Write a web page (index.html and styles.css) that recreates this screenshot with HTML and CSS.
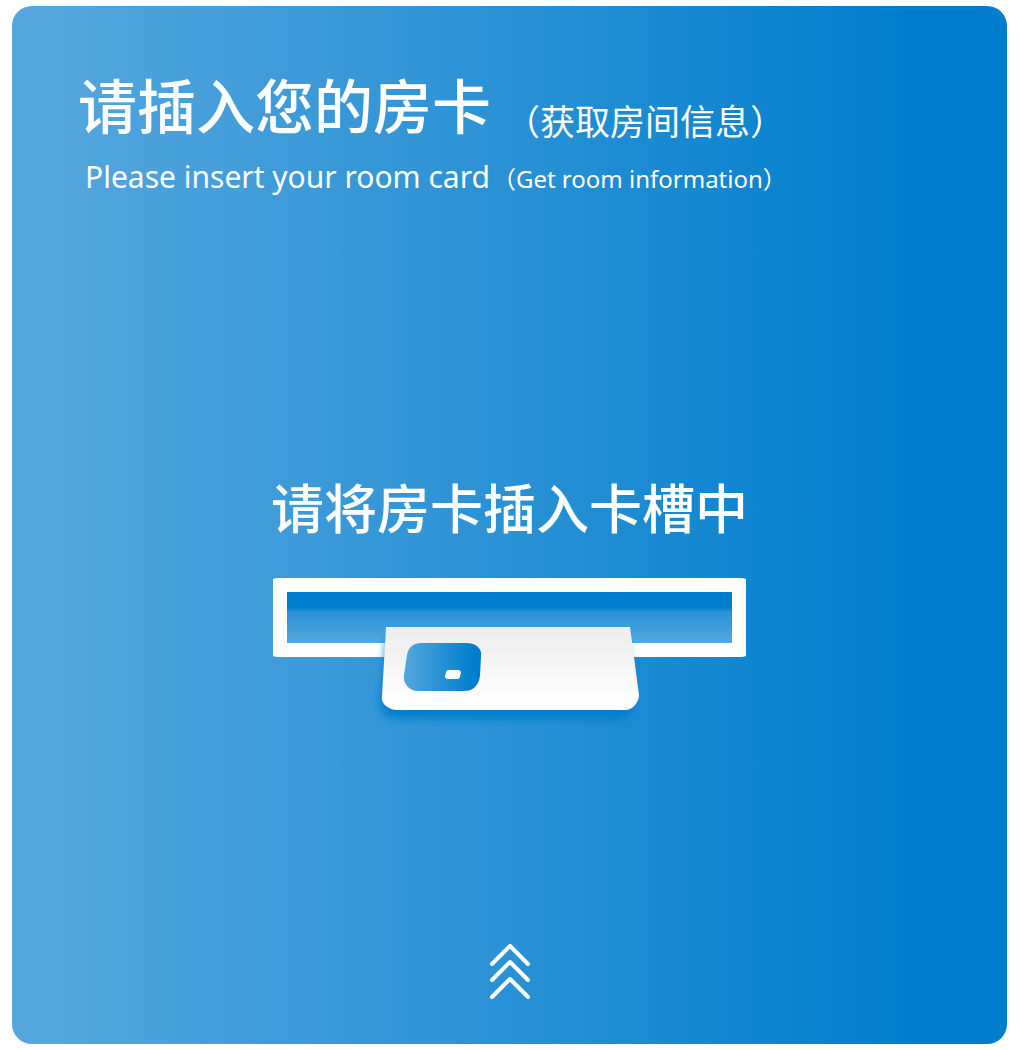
FILE: index.html
```html
<!DOCTYPE html>
<html lang="zh-CN">
<head>
  <meta charset="utf-8">
  <meta name="viewport" content="width=device-width, initial-scale=1">
  <title>请插入您的房卡</title>
  <link rel="stylesheet" href="styles.css">
</head>
<body>
  <main class="panel">
    <header class="intro">
      <h1 class="title"><span class="title-main">请插入您的房卡</span><span class="title-note">（获取房间信息）</span></h1>
      <p class="subtitle" lang="en"><span class="subtitle-main">Please insert your room card</span><span class="subtitle-note">（Get room information）</span></p>
    </header>
    <section class="prompt">
      <h2 class="prompt-text">请将房卡插入卡槽中</h2>
      <svg class="slot" viewBox="0 0 473 156" role="img" aria-label="房卡插入卡槽">
        <defs>
          <linearGradient id="slot-fill" x1="0" y1="0" x2="0" y2="1">
            <stop offset="0" stop-color="#007ecd"/>
            <stop offset=".3" stop-color="#007ecd"/>
            <stop offset=".4" stop-color="#2b92d5"/>
            <stop offset="1" stop-color="#55a7dd"/>
          </linearGradient>
          <linearGradient id="card-fill" x1="0" y1="0" x2="0" y2="1">
            <stop offset="0" stop-color="#ededed"/>
            <stop offset="1" stop-color="#ffffff"/>
          </linearGradient>
          <linearGradient id="chip-fill" x1="0" y1="0" x2="1" y2="0">
            <stop offset="0" stop-color="#55a7dd"/>
            <stop offset=".9" stop-color="#007ecd"/>
          </linearGradient>
          <filter id="card-shadow" x="-10%" y="-20%" width="120%" height="150%">
            <feGaussianBlur stdDeviation="4"/>
          </filter>
          <clipPath id="below-opening">
            <rect x="90" y="49" width="300" height="107"/>
          </clipPath>
        </defs>
        <path fill="#fff" d="M6 0H467Q471 0 473 1V78Q471 79 467 79H6Q2 79 0 78V1Q2 0 6 0Z"/>
        <rect x="14" y="14" width="445" height="51" fill="url(#slot-fill)"/>
        <g clip-path="url(#below-opening)">
          <path fill="#007ecd" filter="url(#card-shadow)" d="M114 59H354L360 127Q360 132 356 136T348 141H124Q118 141 113 137T107 126Z"/>
          <path fill="url(#card-fill)" d="M113 49H357L366 117Q366 122 362 127T352 132H124Q118 132 113 128T109 118Z"/>
        </g>
        <path fill="url(#chip-fill)" d="M149 65H193Q201 65 205 69T208 79L207 98Q206 105 202 109T191 113H146Q138 113 134 108T131 97L134 77Q136 65 149 65Z"/>
        <path fill="#fff" d="M176 92H185Q188 92 188 95L187 98Q187 101 184 101H175Q172 101 172 98L173 95Q173 92 176 92Z"/>
      </svg>
    </section>
    <svg class="arrows" viewBox="0 0 42 56" aria-hidden="true">
      <path d="M3 20 21 2 39 20M3 36 21 18 39 36M3 53 21 35 39 53"/>
    </svg>
  </main>
</body>
</html>
```
FILE: styles.css
```css
* {
  box-sizing: border-box;
}

body {
  margin: 0;
  padding: 6px 13px 6px 12px;
  background: #fff;
  color: #fff;
  font-family: "Noto Sans", "Noto Sans CJK SC", sans-serif;
}

.panel {
  display: flex;
  flex-direction: column;
  align-items: center;
  justify-content: space-between;
  min-height: calc(100vh - 12px);
  padding: 64px 20px 44px;
  border-radius: 20px;
  background: linear-gradient(90deg, #54a6dd 4%, #2b92d5 48%, #007ecd 90%);
}

.intro {
  align-self: stretch;
  padding-left: 46px;
}

.title,
.subtitle,
.prompt-text {
  margin: 0;
  font-weight: 400;
}

.title {
  display: flex;
  align-items: flex-end;
  gap: 14px;
  font-family: "Noto Sans CJK SC", sans-serif;
}

.title-main {
  font-size: 59px;
  font-weight: 500;
  line-height: 68px;
}

.title-note {
  font-size: 35px;
  line-height: 36px;
}

.subtitle {
  display: flex;
  align-items: baseline;
  gap: 2px;
  padding: 17px 0 0 7px;
  line-height: 44px;
}

.subtitle-main {
  font-size: 30px;
}

.subtitle-note {
  font-size: 24px;
}

.prompt {
  display: flex;
  flex-direction: column;
  align-items: center;
  gap: 38px;
  padding-top: 60px;
}

.prompt-text {
  font-family: "Noto Sans CJK SC", sans-serif;
  font-size: 53px;
  font-weight: 500;
  line-height: 68px;
}

.slot {
  display: block;
  width: 473px;
  max-width: 100%;
}

.arrows {
  display: block;
  width: 42px;
  fill: none;
  stroke: #fff;
  stroke-width: 4;
  stroke-linecap: round;
  stroke-linejoin: round;
}
```
